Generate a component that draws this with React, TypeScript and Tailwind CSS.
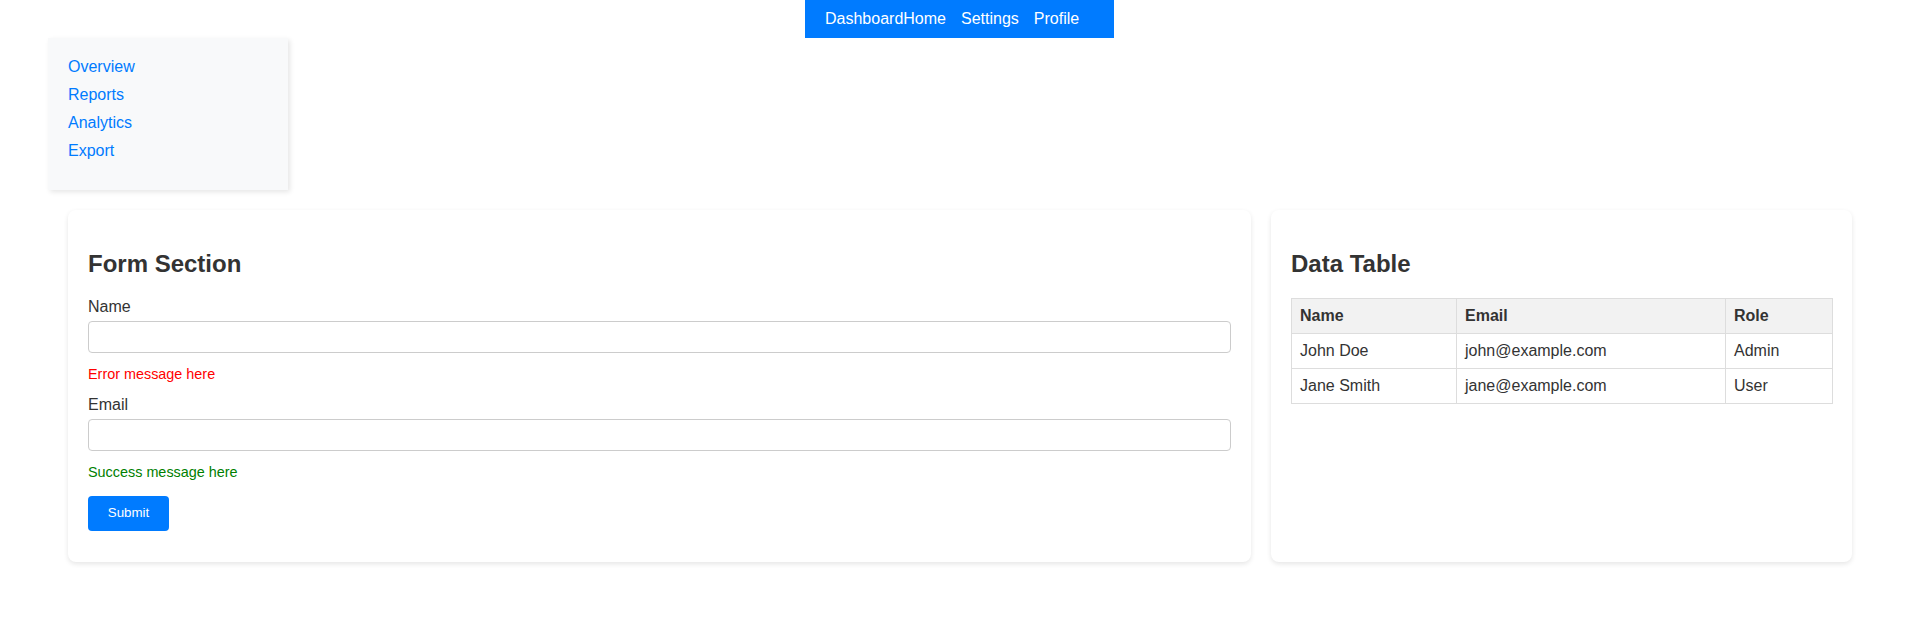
import React from "react";

export default function App() {
  const font = { fontFamily: '"Liberation Sans", Arial, Helvetica, sans-serif' };
  return (
    <div className="min-h-[619px] w-full bg-white text-[#333] text-[16px] leading-[18px]" style={font}>
      <nav className="ml-[805px] flex w-fit bg-[#007bff] px-[20px] py-[10px] text-white">
        <span>Dashboard</span>
        <ul className="flex">
          <li className="mr-[15px]">Home</li>
          <li className="mr-[15px]">Settings</li>
          <li className="mr-[15px]">Profile</li>
        </ul>
      </nav>
      <aside className="ml-[48px] w-[240px] bg-[#f8f9fa] px-[20px] pt-[20px] pb-[20px] shadow-[2px_2px_5px_rgba(0,0,0,0.1)]">
        <ul className="text-[#007bff] leading-[18px]">
          <li className="mb-[10px]">Overview</li>
          <li className="mb-[10px]">Reports</li>
          <li className="mb-[10px]">Analytics</li>
          <li className="mb-[10px]">Export</li>
        </ul>
      </aside>
      <main className="ml-[68px] mt-[20px] flex gap-[20px]">
        <section className="w-[1183px] rounded-[8px] bg-white px-[20px] pt-[20px] pb-[31px] shadow-[0_2px_5px_rgba(0,0,0,0.1)]">
          <h2 className="mt-[20px] mb-[20px] text-[24px] leading-[27.6px] font-bold">Form Section</h2>
          <label className="mb-[5px] block">Name</label>
          <div className="h-[32px] w-full rounded-[4px] border border-[#ccc]" />
          <div className="mt-[13px] mb-[14px] text-[14.4px] leading-[16.5px] text-[#ff0000]">Error message here</div>
          <label className="mb-[5px] block">Email</label>
          <div className="h-[32px] w-full rounded-[4px] border border-[#ccc]" />
          <div className="mt-[13px] mb-[15px] text-[14.4px] leading-[16.5px] text-[#008000]">Success message here</div>
          <button className="h-[35px] w-[81px] rounded-[4px] bg-[#007bff] text-[13.33px] text-white">Submit</button>
        </section>
        <section className="w-[581px] rounded-[8px] bg-white p-[20px] shadow-[0_2px_5px_rgba(0,0,0,0.1)]">
          <h2 className="mt-[20px] mb-[20px] text-[24px] leading-[27.6px] font-bold">Data Table</h2>
          <table className="w-[541px] table-fixed border-collapse text-left">
            <colgroup>
              <col className="w-[165px]" />
              <col className="w-[269px]" />
              <col className="w-[107px]" />
            </colgroup>
            <thead>
              <tr className="bg-[#f2f2f2]">
                <th className="border border-[#ddd] p-[8px] font-bold">Name</th>
                <th className="border border-[#ddd] p-[8px] font-bold">Email</th>
                <th className="border border-[#ddd] p-[8px] font-bold">Role</th>
              </tr>
            </thead>
            <tbody>
              <tr>
                <td className="border border-[#ddd] p-[8px]">John Doe</td>
                <td className="border border-[#ddd] p-[8px]">john@example.com</td>
                <td className="border border-[#ddd] p-[8px]">Admin</td>
              </tr>
              <tr>
                <td className="border border-[#ddd] p-[8px]">Jane Smith</td>
                <td className="border border-[#ddd] p-[8px]">jane@example.com</td>
                <td className="border border-[#ddd] p-[8px]">User</td>
              </tr>
            </tbody>
          </table>
        </section>
      </main>
    </div>
  );
}
